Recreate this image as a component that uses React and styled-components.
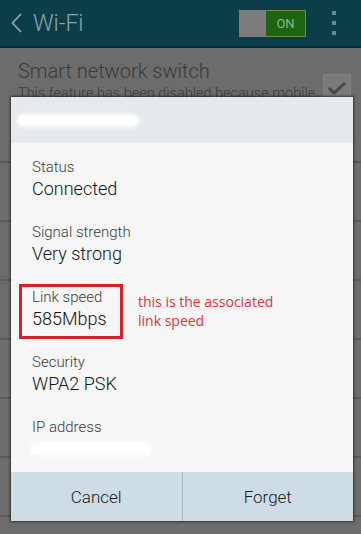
import React from 'react'
import styled, { createGlobalStyle } from 'styled-components'

const Global = createGlobalStyle`
  html, body {
    margin: 0;
    padding: 0;
    background: #6c6c6c;
  }
  body {
    font-family: Roboto, "Noto Sans", "Liberation Sans", sans-serif;
  }
`

const Screen = styled.div`
  position: relative;
  width: 361px;
  height: 534px;
  overflow: hidden;
  background: #6c6c6c;
`

const AppBar = styled.div`
  height: 46px;
  display: flex;
  align-items: center;
  background: #0c3e4a;
  border-bottom: 2px solid #062a32;
  padding: 0 0 0 11px;
`

const Title = styled.div`
  flex: 1;
  display: flex;
  align-items: center;
  gap: 11px;
  color: #8ea3a9;
  font-size: 23px;
  font-weight: 300;
`

const Toggle = styled.div`
  display: flex;
  width: 67px;
  height: 27px;
  margin-right: 26px;
  box-sizing: border-box;
`

const ToggleOff = styled.div`
  width: 26px;
  background: #7b7b7b;
`

const ToggleOn = styled.div`
  flex: 1;
  display: flex;
  align-items: center;
  justify-content: center;
  background: #1d6512;
  border: 1px solid #6e8f4a;
  color: #8bb585;
  font-size: 13px;
`

const Dots = styled.div`
  display: flex;
  flex-direction: column;
  gap: 6px;
  margin-right: 25px;

  & span {
    width: 4px;
    height: 4px;
    background: #6d8a92;
  }
`

const SmartRow = styled.div`
  height: 115px;
  box-sizing: border-box;
  border-bottom: 2px solid #585858;
  padding: 10px 10px 0 18px;
  display: flex;
  color: #3b3b3b;
  font-weight: 300;
`

const SmartText = styled.div`
  flex: 1;
`

const SmartTitle = styled.div`
  font-size: 20px;
  line-height: 26px;
`

const SmartSub = styled.div`
  font-size: 14.5px;
  line-height: 20px;
  white-space: nowrap;
`

const Check = styled.div`
  width: 26px;
  height: 26px;
  margin-top: 16px;
  background: #7a7a7a;
  border: 1px solid #828282;
  display: flex;
  align-items: center;
  justify-content: center;
`

const BgRow = styled.div`
  height: 57px;
  border-bottom: 2px solid #5a5a5a;
`

const Dialog = styled.div`
  position: absolute;
  left: 11px;
  top: 97px;
  width: 342px;
  height: 424px;
  display: flex;
  flex-direction: column;
  box-shadow: 0 0 2px 1px rgba(0, 0, 0, 0.55);
  background: #f6f6f6;
`

const DialogHead = styled.div`
  height: 46px;
  background: #e6eaed;
  display: flex;
  align-items: center;
  padding-left: 8px;
`

const Smudge = styled.div`
  width: ${p => p.w}px;
  height: ${p => p.h}px;
  background: #ffffff;
  border-radius: 6px;
  box-shadow: 0 0 4px 2px #ffffff;
`

const Body = styled.div`
  flex: 1;
  padding: 14px 0 0 21px;
  display: flex;
  flex-direction: column;
  gap: 21px;
`

const Item = styled.div`
  position: relative;

  ${p => p.highlight && `
    &::before {
      content: '';
      position: absolute;
      left: -13px;
      top: -3px;
      width: 104px;
      height: 55px;
      box-sizing: border-box;
      border: 3px solid #d3222a;
    }
  `}
`

const Label = styled.div`
  font-size: 15px;
  line-height: 20px;
  color: #3c3c3c;
  font-weight: 300;
`

const Value = styled.div`
  font-size: 18px;
  line-height: 24px;
  color: #141414;
  height: 24px;
  display: flex;
  align-items: center;
  font-weight: 300;
`

const Note = styled.div`
  position: absolute;
  left: 106px;
  top: 5px;
  font-family: "Open Sans", "Noto Sans", sans-serif;
  font-size: 14px;
  line-height: 19px;
  color: #e0353c;
  white-space: nowrap;
`

const Buttons = styled.div`
  height: 49px;
  display: flex;
  background: #cedde5;
`

const Button = styled.div`
  flex: 1;
  display: flex;
  align-items: center;
  justify-content: center;
  font-size: 17px;
  color: #1b1b1b;
  font-weight: 300;
  border-left: ${p => (p.divider ? '1px solid #a8b8c0' : 'none')};
`

const items = [
  { label: 'Status', value: 'Connected' },
  { label: 'Signal strength', value: 'Very strong' },
  { label: 'Link speed', value: '585Mbps', highlight: true },
  { label: 'Security', value: 'WPA2 PSK' },
  { label: 'IP address', value: null },
]

export default function App() {
  return (
    <Screen>
      <Global />
      <AppBar>
        <Title>
          <svg width="11" height="20" viewBox="0 0 11 20">
            <polyline points="10,1 1.5,10 10,19" fill="none" stroke="#8ea3a9" strokeWidth="1.8" />
          </svg>
          Wi-Fi
        </Title>
        <Toggle>
          <ToggleOff />
          <ToggleOn>ON</ToggleOn>
        </Toggle>
        <Dots>
          <span />
          <span />
          <span />
        </Dots>
      </AppBar>

      <SmartRow>
        <SmartText>
          <SmartTitle>Smart network switch</SmartTitle>
          <SmartSub>This feature has been disabled because mobile</SmartSub>
        </SmartText>
        <Check>
          <svg width="20" height="16" viewBox="0 0 20 16">
            <polyline points="2,8 7,13 18,3" fill="none" stroke="#474747" strokeWidth="3" />
          </svg>
        </Check>
      </SmartRow>
      <BgRow />
      <BgRow />
      <BgRow />
      <BgRow />
      <BgRow />
      <BgRow />

      <Dialog>
        <DialogHead>
          <Smudge w={118} h={9} />
        </DialogHead>
        <Body>
          {items.map(it => (
            <Item key={it.label} highlight={it.highlight}>
              <Label>{it.label}</Label>
              <Value>{it.value ? it.value : <Smudge w={118} h={10} />}</Value>
              {it.highlight && (
                <Note>
                  this is the associated
                  <br />
                  link speed
                </Note>
              )}
            </Item>
          ))}
        </Body>
        <Buttons>
          <Button>Cancel</Button>
          <Button divider>Forget</Button>
        </Buttons>
      </Dialog>
    </Screen>
  )
}
